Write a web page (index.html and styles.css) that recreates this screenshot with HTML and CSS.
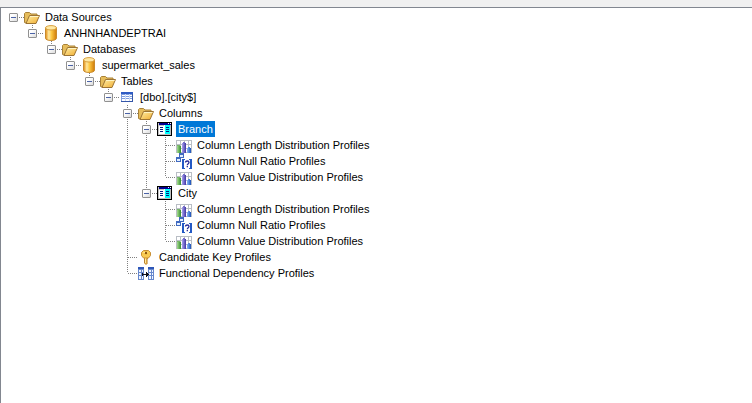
FILE: index.html
```html
<!DOCTYPE html>
<html lang="en">
<head>
<meta charset="utf-8">
<title>Data Sources</title>
<link rel="stylesheet" href="styles.css">
</head>
<body>
<svg class="sprite" aria-hidden="true">
  <defs>
    <linearGradient id="gold" x1="0" x2="1" y1="0" y2="0">
      <stop offset="0" stop-color="#e08a10"/><stop offset=".3" stop-color="#ffe9a0"/><stop offset=".55" stop-color="#fcc640"/><stop offset="1" stop-color="#cf7a08"/>
    </linearGradient>
    <linearGradient id="flap" x1="0" x2="1" y1="0" y2="1">
      <stop offset="0" stop-color="#fff0a8"/><stop offset="1" stop-color="#f0ac30"/>
    </linearGradient>
    <linearGradient id="green" x1="0" x2="1"><stop offset="0" stop-color="#a8dc90"/><stop offset="1" stop-color="#2f8a2c"/></linearGradient>
    <linearGradient id="violet" x1="0" x2="1"><stop offset="0" stop-color="#a9a4ee"/><stop offset="1" stop-color="#4034a4"/></linearGradient>
    <linearGradient id="blue" x1="0" x2="1"><stop offset="0" stop-color="#8ab8f8"/><stop offset="1" stop-color="#1c50b8"/></linearGradient>
  </defs>
  <symbol id="folder" viewBox="0 0 16 16">
    <path d="M.5 13.500v-9l1-1h4l1.500 1.500h6V8l-3 6H2z" fill="#e6bd5c" stroke="#a98238"/>
    <path d="M2 14.500 5.500 6.500h10l-3.500 8z" fill="url(#flap)" stroke="#9c7434"/>
    <path d="M6 7.500h8.500" stroke="#fff5c4"/>
  </symbol>
  <symbol id="database" viewBox="0 0 16 16">
    <path d="M2.500 2.800v10.400c0 3 11 3 11 0V2.800z" fill="url(#gold)" stroke="#c98a2c"/>
    <ellipse cx="8" cy="2.800" rx="5.500" ry="2.200" fill="#ffe9a4" stroke="#d9a040"/>
  </symbol>
  <symbol id="table" viewBox="0 0 16 16">
    <g shape-rendering="crispEdges">
      <path d="M2 3h12v10H2z" fill="#7d9de0"/>
      <path d="M2 3h12v2H2z" fill="#2e5bc4"/>
      <path d="M3 6h3v1H3zm4 0h3v1H7zm4 0h2v1h-2zM3 8h3v1H3zm4 0h3v1H7zm4 0h2v1h-2zM3 10h3v2H3zm4 0h3v2H7zm4 0h2v2h-2z" fill="#fff"/>
      <path d="M6 5h1v7H6zM10 5h1v7h-1z" fill="#c9daf8"/>
      <path d="M2 12h12v1H2zM13 5h1v8h-1z" fill="#3456a8"/>
    </g>
  </symbol>
  <symbol id="column" viewBox="0 0 16 16">
    <g shape-rendering="crispEdges">
      <path d="M0 1h15v14H0z" fill="#000"/>
      <path d="M1 2h13v12H1z" fill="#c0c0c0"/>
      <path d="M2 2h12v2H2z" fill="#000090"/>
      <path d="M11 2h1v1h-1zm2 0h1v1h-1z" fill="#fff"/>
      <path d="M2 5h5v8H2z" fill="#fff"/>
      <path d="M8 4h5v9H8z" fill="#00ffff"/>
      <path d="M7 4h1v9H7z" fill="#e8ffff"/>
      <path d="M3 6h3v1H3zm0 2h3v1H3zm0 2h3v1H3zM9 6h3v1H9zm0 2h3v1H9zm0 2h3v1H9z" fill="#002080"/>
    </g>
  </symbol>
  <symbol id="chart" viewBox="0 0 16 16">
    <g shape-rendering="crispEdges">
      <path d="M0 3h16v13H0z" fill="#b9bec5"/>
      <path d="M1 4h3v3H1zm4 0h3v3H5zm4 0h3v3H9zm4 0h2v3h-2zM1 8h3v3H1zm4 0h3v3H5zm4 0h3v3H9zm4 0h2v3h-2zM1 12h3v3H1zm4 0h3v3H5zm4 0h3v3H9zm4 0h2v3h-2z" fill="#fff"/>
      <path d="M1 9h4v7H1z" fill="url(#green)"/>
      <path d="M6 6h4v10H6z" fill="url(#violet)"/>
      <path d="M11 11h4v5h-4z" fill="url(#blue)"/>
      <path d="M1 8h3v1H1z" fill="#78b668"/><path d="M7 5h2v1H7z" fill="#7770c8"/><path d="M12 10h2v1h-2z" fill="#5587d8"/>
    </g>
  </symbol>
  <symbol id="nullratio" viewBox="0 0 16 16">
    <g shape-rendering="crispEdges">
      <path d="M3 0h5v5H3zM0 4h5v5H0z" fill="#416ac0"/>
      <path d="M4 2h3v2H4zM1 6h3v2H1z" fill="#e3efff"/>
      <path d="M6 6h3v1H8v8h1v1H6zM13 6h3v10h-3v-1h1V7h-1z" fill="#2459c4"/>
    </g>
    <path d="M9.500 9.500c0-2 3.500-2 3.500 0 0 1.200-1.700 1.200-1.700 2.700M11.300 13v1.300" fill="none" stroke="#282c98" stroke-width="1.300"/>
  </symbol>
  <symbol id="key" viewBox="0 0 16 16">
    <path d="M6.500 8.500h3v1.500l-1 1 1 1-1 1 1 1-1.500 1.500-1.500-1.500z" fill="#f3bd3c" stroke="#b88030"/>
    <path d="M5.500 1.500h5l2 2v3l-2 2.500h-5L3.500 6.500v-3z" fill="#f9ca50" stroke="#c99038"/>
    <path d="M5.500 3.500h4" stroke="#fff1ad"/>
    <circle cx="8" cy="4" r="1.200" fill="#8c540a"/>
    <path d="M7.500 9.500V14" stroke="#ffeaa0"/>
  </symbol>
  <symbol id="dependency" viewBox="0 0 16 16">
    <g shape-rendering="crispEdges">
      <path d="M0 2h6v13H0zM10 2h6v13h-6z" fill="#6687cc"/>
      <path d="M0 2h6v2H0zM10 2h6v2h-6z" fill="#2d56b8"/>
      <path d="M1 5h2v2H1zm3 0h1v2H4zM1 8h2v2H1zm3 0h1v2H4zM1 11h2v3H1zm3 0h1v3H4zM11 5h2v2h-2zm3 0h1v2h-1zM11 8h2v2h-2zm3 0h1v2h-1zM11 11h2v3h-2zm3 0h1v3h-1z" fill="#f1f6ff"/>
      <path d="M4 9h7v1H4zM8 7h1v5H8zM9 8h1v3H9zM4 8h1v3H4z" fill="#101018"/>
    </g>
  </symbol>
</svg>

<main class="panel">
  <ul class="tree" aria-label="Data sources">
    <li class="node">
      <div class="row"><button class="toggle" aria-expanded="true" aria-label="Data Sources"></button><svg class="icon"><use href="#folder"/></svg><span class="label">Data Sources</span></div>
      <ul class="branch"><li class="node">
        <div class="row"><button class="toggle" aria-expanded="true" aria-label="ANHNHANDEPTRAI"></button><svg class="icon"><use href="#database"/></svg><span class="label">ANHNHANDEPTRAI</span></div>
        <ul class="branch"><li class="node">
          <div class="row"><button class="toggle" aria-expanded="true" aria-label="Databases"></button><svg class="icon"><use href="#folder"/></svg><span class="label">Databases</span></div>
          <ul class="branch"><li class="node">
            <div class="row"><button class="toggle" aria-expanded="true" aria-label="supermarket_sales"></button><svg class="icon"><use href="#database"/></svg><span class="label">supermarket_sales</span></div>
            <ul class="branch"><li class="node">
              <div class="row"><button class="toggle" aria-expanded="true" aria-label="Tables"></button><svg class="icon"><use href="#folder"/></svg><span class="label">Tables</span></div>
              <ul class="branch"><li class="node">
                <div class="row"><button class="toggle" aria-expanded="true" aria-label="[dbo].[city$]"></button><svg class="icon"><use href="#table"/></svg><span class="label">[dbo].[city$]</span></div>
                <ul class="branch">
                  <li class="node">
                    <div class="row"><button class="toggle" aria-expanded="true" aria-label="Columns"></button><svg class="icon"><use href="#folder"/></svg><span class="label">Columns</span></div>
                    <ul class="branch">
                      <li class="node">
                        <div class="row"><button class="toggle" aria-expanded="true" aria-label="Branch"></button><svg class="icon"><use href="#column"/></svg><span class="label selected">Branch</span></div>
                        <ul class="branch">
                          <li class="node"><div class="row leaf"><svg class="icon"><use href="#chart"/></svg><span class="label">Column Length Distribution Profiles</span></div></li>
                          <li class="node"><div class="row leaf"><svg class="icon"><use href="#nullratio"/></svg><span class="label">Column Null Ratio Profiles</span></div></li>
                          <li class="node"><div class="row leaf"><svg class="icon"><use href="#chart"/></svg><span class="label">Column Value Distribution Profiles</span></div></li>
                        </ul>
                      </li>
                      <li class="node">
                        <div class="row"><button class="toggle" aria-expanded="true" aria-label="City"></button><svg class="icon"><use href="#column"/></svg><span class="label">City</span></div>
                        <ul class="branch">
                          <li class="node"><div class="row leaf"><svg class="icon"><use href="#chart"/></svg><span class="label">Column Length Distribution Profiles</span></div></li>
                          <li class="node"><div class="row leaf"><svg class="icon"><use href="#nullratio"/></svg><span class="label">Column Null Ratio Profiles</span></div></li>
                          <li class="node"><div class="row leaf"><svg class="icon"><use href="#chart"/></svg><span class="label">Column Value Distribution Profiles</span></div></li>
                        </ul>
                      </li>
                    </ul>
                  </li>
                  <li class="node"><div class="row leaf"><svg class="icon"><use href="#key"/></svg><span class="label">Candidate Key Profiles</span></div></li>
                  <li class="node"><div class="row leaf"><svg class="icon"><use href="#dependency"/></svg><span class="label">Functional Dependency Profiles</span></div></li>
                </ul>
              </li></ul>
            </li></ul>
          </li></ul>
        </li></ul>
      </li></ul>
    </li>
  </ul>
</main>
</body>
</html>
```
FILE: styles.css
```css
* { box-sizing: border-box; }

body {
  margin: 0;
  min-height: 100vh;
  padding-top: 7px;
  display: flex;
  flex-direction: column;
  background: #f0f0f0;
  color: #000;
  font: 11px/16px "Liberation Sans", Arial, sans-serif;
}

.sprite {
  position: absolute;
  width: 0;
  height: 0;
}

.panel {
  flex: 1;
  padding: 1px 0 0 8px;
  border: solid #828790;
  border-width: 1px 0 0 1px;
  background: #fff;
}

.tree,
.branch {
  margin: 0;
  padding: 0;
  list-style: none;
}

.branch { padding-left: 19px; }

.node { position: relative; }

/* Dotted guide from the parent's icon down to each child */
.branch > .node::before {
  content: "";
  position: absolute;
  top: 0;
  bottom: 0;
  left: 4px;
  width: 1px;
  background: repeating-linear-gradient(to bottom, #808080 0 1px, transparent 1px 2px);
}

.branch > .node:last-child::before {
  bottom: auto;
  height: 8px;
}

.row {
  display: flex;
  align-items: center;
  height: 16px;
  white-space: nowrap;
}

/* Dotted guide that leads to the icon */
.row::before {
  content: "";
  order: 1;
  width: 6px;
  height: 1px;
  background: repeating-linear-gradient(to right, transparent 0 1px, #808080 1px 2px);
}

.row.leaf::before {
  width: 11px;
  margin-left: 4px;
}

.toggle {
  position: relative;
  width: 9px;
  height: 9px;
  padding: 0;
  border: 1px solid #919191;
  border-radius: 1px;
  background: linear-gradient(135deg, #fff 30%, #dcdcdc);
}

.toggle::after {
  content: "";
  position: absolute;
  top: 3px;
  left: 1px;
  width: 5px;
  height: 1px;
  background: #4b63a7;
}

.icon {
  order: 2;
  flex: none;
  width: 16px;
  height: 16px;
}

.label {
  order: 3;
  margin-left: 3px;
  padding: 0 2px;
}

.selected {
  background: #0078d7;
  color: #fff;
}
```
